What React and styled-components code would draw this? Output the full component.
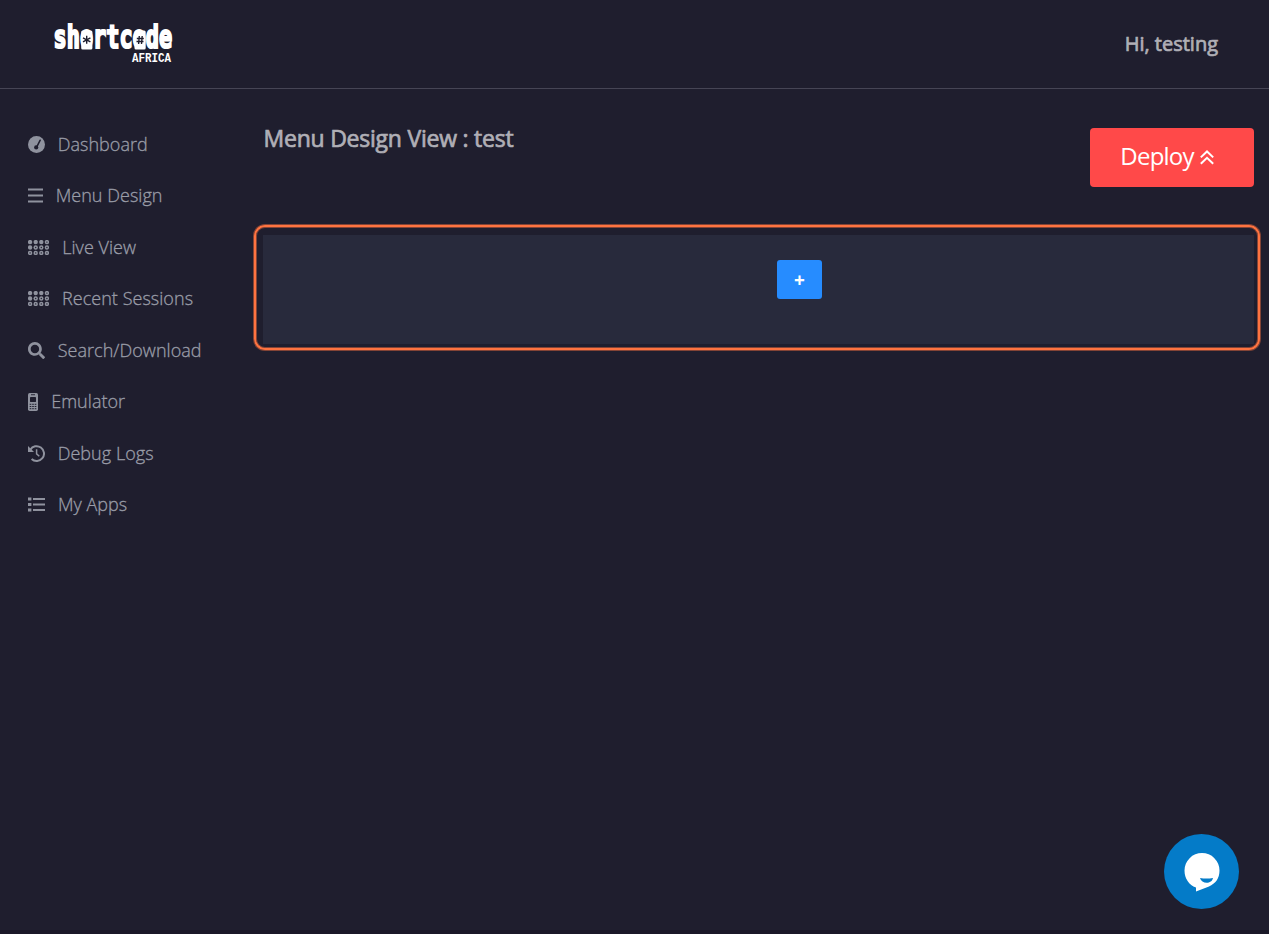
import React from 'react';
import styled, { createGlobalStyle } from 'styled-components';
import { FaSearch } from 'react-icons/fa';

const Global = createGlobalStyle`
  * { box-sizing: border-box; }
  body { margin: 0; background: #1f1e2e; font-family: "Open Sans", "Noto Sans", sans-serif; overflow: hidden; }
`;

const Page = styled.div`
  height: 934px;
  display: flex;
  flex-direction: column;
  background: #1f1e2e;
  border-bottom: 4px solid #1a1828;
`;

const Header = styled.header`
  height: 89px;
  flex: none;
  display: flex;
  align-items: center;
  justify-content: space-between;
  padding: 0 51px 0 53px;
  border-bottom: 1px solid #464555;
`;

const Logo = styled.svg`
  display: block;
  width: 122px;
  height: 46px;
  margin-top: -4px;
  overflow: visible;
`;

const Greeting = styled.div`
  font-size: 20px;
  line-height: 28px;
  color: #b0afb6;
  -webkit-text-stroke: 0.7px #b0afb6;
`;

const Body = styled.div`
  flex: 1;
  display: flex;
`;

const Sidebar = styled.nav`
  width: 254px;
  flex: none;
  padding: 29.7px 0 0 28px;
`;

const NavItem = styled.a`
  display: flex;
  align-items: center;
  height: 51.5px;
  gap: ${(p) => p.$gap}px;
  font-size: 18px;
  font-weight: 300;
  letter-spacing: 0.04px;
  color: #9a9da8;
  -webkit-text-stroke: 0.3px #9a9da8;
  white-space: nowrap;
  span { margin-top: -1px; }
  svg { flex: none; display: block; color: #8f929e; }
`;

const Main = styled.main`
  flex: 1;
  padding: 34px 9px 0 0;
`;

const TitleRow = styled.div`
  display: flex;
  justify-content: space-between;
  align-items: flex-start;
  height: 102px;
  padding: 0 6px 0 9.5px;
`;

const Title = styled.h1`
  margin: 0;
  font-size: 23px;
  font-weight: 400;
  letter-spacing: -0.23px;
  line-height: 30px;
  color: #b0afb6;
  -webkit-text-stroke: 0.7px #b0afb6;
`;

const DeployButton = styled.button`
  width: 164px;
  height: 59px;
  margin-top: 5px;
  padding: 0 10px 5px 0;
  display: flex;
  align-items: center;
  justify-content: center;
  gap: 6px;
  border: 0;
  border-radius: 4px;
  background: #ff4949;
  color: #fff;
  font: 400 24px "Open Sans", sans-serif;
  letter-spacing: -0.8px;
  svg { display: block; margin-top: 5px; }
`;

const Highlight = styled.section`
  height: 125px;
  padding: 8px 4px 0 7px;
  border: 2px solid #ff7340;
  border-radius: 11px;
  box-shadow: 0 0 0 1px rgba(255, 115, 64, 0.45), inset 0 0 0 1px rgba(255, 115, 64, 0.45);
`;

const Panel = styled.div`
  height: 109px;
  display: flex;
  justify-content: center;
  padding: 25px 0 0 82px;
  background: #282a3c;
`;

const AddButton = styled.button`
  width: 45px;
  height: 39px;
  border: 0;
  border-radius: 3px;
  padding: 0;
  display: flex;
  align-items: center;
  justify-content: center;
  background: #268cff;
  color: #fff;
  font: 700 19px "Open Sans", sans-serif;
`;

const ChatButton = styled.button`
  position: fixed;
  right: 30px;
  bottom: 25px;
  width: 75px;
  height: 75px;
  padding: 0;
  border: 0;
  border-radius: 50%;
  background: #047bc8;
  svg { display: block; }
`;

const Gauge = () => (
  <svg width="17" height="17" viewBox="0 0 17 17">
    <circle cx="8.5" cy="8.5" r="8.5" fill="currentColor" />
    <path d="M12.2 4.2 8.9 10.7" stroke="#1f1e2e" strokeWidth="1.5" strokeLinecap="round" />
    <circle cx="8.2" cy="11.4" r="2.1" fill="#1f1e2e" />
  </svg>
);

const Bars = () => (
  <svg width="15" height="15" viewBox="0 0 15 15">
    <path d="M0 1.5h15M0 7.5h15M0 13.5h15" stroke="currentColor" strokeWidth="2.2" />
  </svg>
);

const List = () => (
  <svg width="17" height="15" viewBox="0 0 17 15" stroke="currentColor">
    <path d="M0 2h3.4M0 7.5h3.4M0 13h3.4" strokeWidth="3.2" />
    <path d="M5 2h12M5 7.5h12M5 13h12" strokeWidth="2.1" />
  </svg>
);

const History = () => (
  <svg width="17" height="17" viewBox="0 0 17 17" fill="none" stroke="currentColor">
    <path d="M2.3 4.7A7.4 7.4 0 1 1 3.6 14" strokeWidth="2" />
    <path d="M0 1v6h6z" fill="currentColor" stroke="none" />
    <path d="M8.6 4.3v4.6l2.7 2.3" strokeWidth="1.5" />
  </svg>
);

const ChevronsUp = () => (
  <svg width="14" height="15" viewBox="0 0 14 15" fill="none" stroke="#fff" strokeWidth="2">
    <path d="M.8 7.4 7 1.5l6.200 5.900M.8 13.800 7 7.900l6.200 5.900" />
  </svg>
);

const HOLES = [[0, 0, 0, 1], [0, 1, 1, 1], [1, 1, 1, 1]];
const Dots = () => (
  <svg width="21" height="15" viewBox="0 0 21 15">
    {HOLES.map((row, y) =>
      row.map((hole, x) => (
        <g key={`${x}-${y}`}>
          <circle cx={2.1 + x * 5.6} cy={2.1 + y * 5.4} r="2.2" fill="currentColor" />
          {hole ? <circle cx={2.1 + x * 5.6} cy={2.1 + y * 5.4} r="0.7" fill="#1f1e2e" /> : null}
        </g>
      ))
    )}
  </svg>
);

const Phone = () => (
  <svg width="10" height="18" viewBox="0 0 10 18">
    <rect width="10" height="18" rx="1.7" fill="currentColor" />
    <g fill="#1f1e2e">
      <rect x="3" y="1.3" width="4" height="0.9" />
      <rect x="2" y="4" width="6" height="5" rx="0.4" />
      {[10.8, 13, 15.2].map((y) =>
        [1.7, 4.2, 6.7].map((x) => <rect key={`${x}-${y}`} x={x} y={y} width="1.6" height="1" />)
      )}
    </g>
  </svg>
);

const NAV = [
  { label: 'Dashboard', icon: <Gauge />, gap: 12.7 },
  { label: 'Menu Design', icon: <Bars />, gap: 12.7 },
  { label: 'Live View', icon: <Dots />, gap: 13.2 },
  { label: 'Recent Sessions', icon: <Dots />, gap: 13 },
  { label: 'Search/Download', icon: <FaSearch size={17} />, gap: 12.7 },
  { label: 'Emulator', icon: <Phone />, gap: 13.2 },
  { label: 'Debug Logs', icon: <History />, gap: 12.7 },
  { label: 'My Apps', icon: <List />, gap: 12.9 },
];

export default function App() {
  return (
    <>
      <Global />
      <Page>
        <Header>
          <Logo viewBox="0 0 122 46" fill="#fff">
            <text transform="translate(0.6 29.3) scale(0.63 1)" fontFamily="DejaVu Sans Mono, monospace" fontWeight="700" fontSize="32" textLength="188" lengthAdjust="spacingAndGlyphs" stroke="#fff" strokeWidth="2.2" strokeLinejoin="miter">shortcode</text>
            <rect x="28.2" y="11.5" width="11.2" height="19" rx="1.5" />
            <rect x="81.5" y="11.5" width="11.2" height="19" rx="1.5" />
            <g fill="none" stroke="#1f1e2e" strokeWidth="1.4">
              <path d="M33.7 16.8v8M30 18.8l7.4 4M37.4 18.8l-7.4 4" />
              <path d="M86.3 17l-.7 8M89.2 17l-.7 8M83.8 19.5h7M83.5 22.5h7" />
            </g>
            <text x="79" y="43" fontFamily="Liberation Mono, monospace" fontWeight="700" fontSize="12" textLength="39" lengthAdjust="spacingAndGlyphs">AFRICA</text>
          </Logo>
          <Greeting>Hi, testing</Greeting>
        </Header>
        <Body>
          <Sidebar>
            {NAV.map((item) => (
              <NavItem key={item.label} $gap={item.gap}>{item.icon}<span>{item.label}</span></NavItem>
            ))}
          </Sidebar>
          <Main>
            <TitleRow>
              <Title>Menu Design View : test</Title>
              <DeployButton>Deploy<ChevronsUp /></DeployButton>
            </TitleRow>
            <Highlight>
              <Panel><AddButton>+</AddButton></Panel>
            </Highlight>
          </Main>
        </Body>
      </Page>
      <ChatButton aria-label="Chat">
        <svg width="75" height="75" viewBox="0 0 75 75">
          <path d="M38 19a17.5 17.5 0 0 1 17.5 17.5c0 8-4 13-10.5 16L32 57.5v-4C25 51 20.5 44.5 20.5 36.5A17.5 17.5 0 0 1 38 19z" fill="#fff" />
          <path d="M36 44q6.5 1.2 13 0c-1 6.3-11.5 6.3-13 0z" fill="#047bc8" />
        </svg>
      </ChatButton>
    </>
  );
}
